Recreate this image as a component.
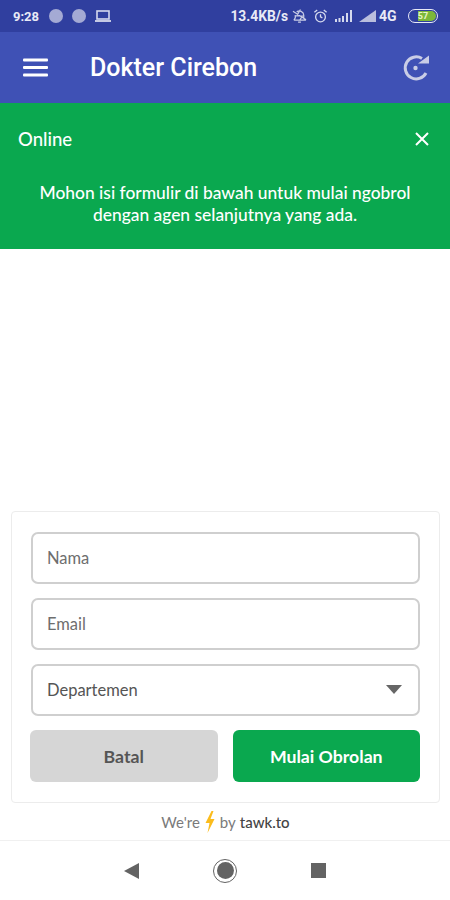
<div class="screen">
  <header class="top">
    <div class="status">
      <span class="time">9:28</span>
      <span class="dot"></span>
      <span class="dot"></span>
      <svg class="laptop" width="18" height="14" viewBox="0 0 18 14"><rect x="3" y="2" width="12" height="8" fill="none" stroke="#d5d9ee" stroke-width="1.6"/><rect x="1" y="11" width="16" height="2" fill="#c4c9e4"/></svg>
      <span class="grow"></span>
      <span class="speed">13.4KB/s</span>
      <svg class="sicon" width="15" height="16" viewBox="0 0 16 16" fill="none" stroke="#c9cde6" stroke-width="1.3"><path d="M2 12.500h12l-1.500-2.500V7a4.500 4.500 0 0 0-7.500-3.200M3.500 7v3L2 12.500M6.500 14.500h3M1 3l14 9M9 1 5 8h6l-3 5"/></svg>
      <svg class="sicon alarm" width="15" height="16" viewBox="0 0 16 16" fill="none" stroke="#d5d9ee" stroke-width="1.4"><circle cx="8" cy="9" r="5.200"/><path d="M8 6v3l2 1M1.500 4l3-2.500M14.500 4l-3-2.500"/></svg>
      <svg class="bars" width="17" height="12" viewBox="0 0 17 12" fill="#d5d9ee"><rect x="0" y="9" width="2" height="3"/><rect x="3.500" y="8" width="2" height="4"/><rect x="7" y="6" width="2" height="6"/><rect x="11" y="3" width="2" height="9"/><rect x="15" y="0" width="2" height="12"/></svg>
      <svg class="bars2" width="17" height="12" viewBox="0 0 17 12" fill="#b9bedd"><path d="M0 12 17 0v12z"/></svg>
      <span class="net">4G</span>
      <span class="battery"><span class="fill">57</span></span>
    </div>
    <div class="appbar">
      <svg class="menu" width="26" height="20" viewBox="0 0 26 20" fill="#fff"><rect x="0" y="0.500" width="25" height="3" rx="1"/><rect x="0" y="8" width="25" height="3" rx="1"/><rect x="0" y="15.500" width="25" height="3" rx="1"/></svg>
      <h1>Dokter Cirebon</h1>
      <svg class="refresh" width="30" height="30" viewBox="0 0 30 30" fill="none" stroke="#c9cde6" stroke-width="3"><path d="M25 20A11 11 0 1 1 21 5.500"/><path d="M17 10.500h11v-8z" fill="#c9cde6" stroke="none"/><circle cx="14.500" cy="15" r="2.200" fill="#c9cde6" stroke="none"/></svg>
    </div>
  </header>

  <section class="banner">
    <div class="banner-top">
      <span>Online</span>
      <svg width="16" height="16" viewBox="0 0 16 16" stroke="#fff" stroke-width="2"><path d="M2 2l12 12M14 2 2 14"/></svg>
    </div>
    <p>Mohon isi formulir di bawah untuk mulai ngobrol<br />dengan agen selanjutnya yang ada.</p>
  </section>

  <main class="body">
    <form class="card">
      <div class="field">Nama</div>
      <div class="field">Email</div>
      <div class="field select">
        <span>Departemen</span>
        <span class="caret"></span>
      </div>
      <div class="actions">
        <div class="btn cancel">Batal</div>
        <div class="btn go">Mulai Obrolan</div>
      </div>
    </form>
    <div class="powered">
      <span>We're</span>
      <svg width="12" height="24" viewBox="0 0 12 24" fill="#fbbc1d"><path d="M7.500 1 1.500 13h4L3.500 23 10.500 9h-4l3-8z"/></svg>
      <span>by</span>
      <b>tawk.to</b>
    </div>
  </main>

  <nav class="nav">
    <span class="back"></span>
    <span class="home"><span></span></span>
    <span class="recent"></span>
  </nav>
</div>

<style>
  :global(body) {
    margin: 0;
    background: #fff;
  }
  .screen {
    width: 450px;
    height: 900px;
    display: flex;
    flex-direction: column;
    font-family: Lato, "Liberation Sans", sans-serif;
    overflow: hidden;
  }
  .top {
    background: #3f51b5;
  }
  .status {
    height: 32px;
    background: #303f9f;
    display: flex;
    align-items: center;
    padding: 0 12px 0 13px;
    box-sizing: border-box;
    color: #e8eaf6;
    font-family: Roboto, sans-serif;
    font-size: 13px;
    font-weight: 700;
  }
  .time {
    width: 36px;
  }
  .dot {
    width: 14px;
    height: 14px;
    border-radius: 50%;
    background: #a4aad4;
    margin-right: 9px;
  }
  .laptop {
    margin-left: -1px;
  }
  .grow {
    flex: 1;
  }
  .speed {
    font-size: 13.800px;
  }
  .sicon {
    margin-left: 4px;
  }
  .alarm {
    margin-left: 6px;
  }
  .bars {
    margin-left: 7px;
  }
  .bars2 {
    margin-left: 7px;
  }
  .net {
    margin-left: 3px;
    width: 24px;
    font-size: 14px;
  }
  .battery {
    width: 30px;
    height: 14px;
    box-sizing: border-box;
    border: 1px solid #e8eaf6;
    border-radius: 7px;
    padding: 1px;
    margin-left: 5px;
    display: flex;
  }
  .fill {
    flex: 1;
    background: linear-gradient(90deg, #303f9f 0 30%, #7cb83a 30%);
    border-radius: 5px;
    color: #e8f5c8;
    font-size: 9px;
    line-height: 10px;
    text-align: center;
  }
  .appbar {
    height: 71px;
    display: flex;
    align-items: center;
    padding: 0 0 0 23px;
  }
  .appbar h1 {
    margin: 0 0 0 41px;
    color: #fff;
    font-family: Roboto, sans-serif;
    font-size: 25px;
    font-weight: 500;
    flex: 1;
  }
  .refresh {
    margin-right: 19px;
  }
  .banner {
    background: #0aa84f;
    color: #fff;
    height: 146px;
    padding: 0 18px;
    box-sizing: border-box;
    font-size: 17.400px;
  }
  .banner-top {
    height: 71px;
    display: flex;
    align-items: center;
    justify-content: space-between;
    padding-right: 2px;
    font-size: 18.500px;
    font-weight: 500;
  }
  .banner p {
    margin: 8px 0 0;
    text-align: center;
    line-height: 22px;
    font-weight: 500;
  }
  .body {
    flex: 1;
    display: flex;
    flex-direction: column;
    justify-content: flex-end;
    padding: 0 10px 0 11px;
  }
  .card {
    border: 1px solid #ececec;
    border-radius: 4px;
    padding: 20px 19px 20px 18px;
    display: flex;
    flex-direction: column;
    gap: 14.500px;
    height: 292px;
    box-sizing: border-box;
  }
  .field {
    height: 52px;
    box-sizing: border-box;
    border: 2px solid #cfcfcf;
    border-radius: 7px;
    margin-left: 1px;
    padding: 0 14px;
    display: flex;
    align-items: center;
    justify-content: space-between;
    color: #6e6e6e;
    font-size: 16.500px;
  }
  .select {
    color: #555;
  }
  .caret {
    border-left: 8.500px solid transparent;
    border-right: 8.500px solid transparent;
    border-top: 9px solid #666;
    margin-right: 2px;
  }
  .actions {
    display: flex;
    gap: 15px;
  }
  .btn {
    flex: 1;
    height: 52px;
    border-radius: 6px;
    display: flex;
    align-items: center;
    justify-content: center;
    font-size: 17.700px;
    font-weight: 700;
  }
  .cancel {
    background: #d6d6d6;
    color: #555;
  }
  .go {
    background: #0aa84f;
    color: #fff;
  }
  .powered {
    height: 37px;
    display: flex;
    align-items: center;
    justify-content: center;
    gap: 4px;
    font-size: 15px;
    color: #7a7a7a;
  }
  .powered b {
    color: #444;
    font-weight: 500;
  }
  .nav {
    height: 59px;
    border-top: 1px solid #f0f0f0;
    display: flex;
    align-items: center;
    justify-content: center;
    gap: 74px;
  }
  .back {
    border-top: 8px solid transparent;
    border-bottom: 8px solid transparent;
    border-right: 15px solid #636363;
  }
  .home {
    width: 22px;
    height: 22px;
    border: 1.500px solid #636363;
    border-radius: 50%;
    display: flex;
    align-items: center;
    justify-content: center;
  }
  .home span {
    width: 17px;
    height: 17px;
    background: #636363;
    border-radius: 50%;
  }
  .recent {
    width: 15px;
    height: 15px;
    background: #636363;
  }
</style>
